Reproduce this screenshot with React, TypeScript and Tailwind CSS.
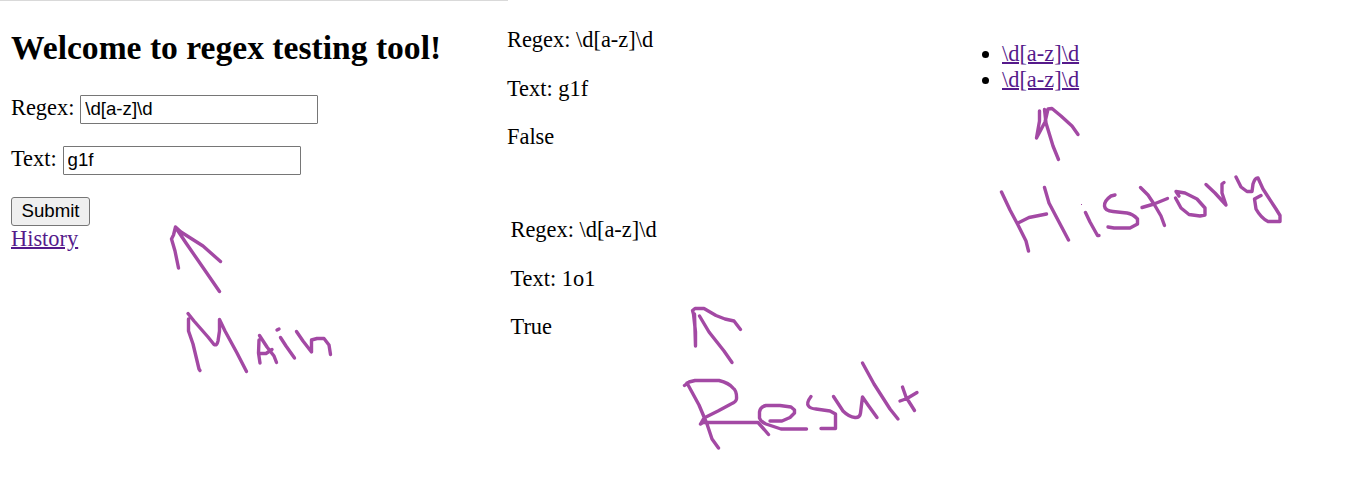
import React, { useState } from "react";

const strokes = [
  // Main: arrow
  "M178.5 268L175 251L171.5 239L173.500 235L175.500 227L181 232L203 246L220.500 261.500M176 228L186 243L204 269L219.500 291.500",
  // Main: letters
  "M188 313.500L194 321L208 337L214 344.500Q217 346 218 341L219.500 331V319.500L225 331L237 353L246.500 371.500M188.500 319V331L193 344L199 369L200 370.500",
  "M259.500 335.500L267 347L274 356L276.500 362.500M259 340L258.500 353L260 363M260 353.500H266L272 349.500",
  "M277 330L279 329M280.500 337.500L286 346L294.500 358",
  "M296.500 331.500L303 341L311.500 352V340L317 338.500H324L329 345L330.500 354.500",
  // Result: arrow
  "M695.500 346V332L693.500 314L692.500 310.500L695 308.500H704L716 315.500L725 319L734 321L740.500 329.500M694.500 314L695.500 346M699.500 316L709 332L724 351L732 362.500",
  // Result: letters
  "M684.500 385.500L689 382L695 380.500H719Q729 383 733 388Q737 391 736.500 399Q736 402 731 404L718 411L704 418L700.500 424L703 422.500H758L762 427L768.500 434.500M687 383L699 405L707 424L712 439L718.500 448",
  "M770 421H782L790 417.500L794.500 413V410L791 407L780 405.500H766Q760 407 759.500 412V418Q761 422 766 424L781 429H806.500",
  "M811 396.500Q806 403 808.500 406Q810 408.500 816 409L830 411L835.500 414V428.500H821M833.500 396.500L843 411Q849 417 855 417.500Q860 418 860.500 413L862.500 397L868 405L877 417.500M862.500 363L874 384L890 409L898 419M902.500 387L906 397L914.500 410.500M900 401L907 398.500L917 392.500",
  // History: arrow
  "M1039.500 111V121L1036.500 138L1045 122L1048 109L1052 108.500L1061 116L1072 126L1078 134.500M1044.500 109.500L1046 123L1053 146L1058.500 159.500",
  // History: letters
  "M1001.500 192L1010 210L1018 225L1026 241L1028.500 251M1018 223L1029 217.500L1046.500 214M1044.500 187.500L1049 203L1059 222L1068.500 240M1085.500 212.500L1090 222L1097.500 235.500L1099 235.500",
  "M1115 195L1111 196Q1104 201 1104.500 206Q1105 211 1113 211.500L1127 213Q1133 214 1137.500 219V224L1130 228H1114L1108 227",
  "M1140.500 187.500L1148 195L1154 204L1161 216L1164.500 225.500M1142 207.500L1154 204L1167.500 198.500",
  "M1179 196L1176 191.500L1185 193L1197 199L1205 208V215L1200 216L1189 214.500L1181 208L1175.500 198M1206 184.500L1215 193L1226 205L1222 193V184L1224 182.500",
  "M1236 177L1241 187L1247 191.500H1252L1253 184Q1255 177.500 1258 178L1263 189L1276 209L1280 215.500V221.500H1268Q1261 218 1256 209L1254.500 199L1261 195.500",
];

function Annotations() {
  return (
    <svg
      className="pointer-events-none absolute inset-0"
      width="1367"
      height="479"
      fill="none"
      stroke="#a349a4"
      strokeWidth="3.400"
      strokeLinecap="round"
      strokeLinejoin="round"
      aria-hidden="true"
    >
      {strokes.map((d) => (
        <path key={d} d={d} />
      ))}
      <rect x="1081" y="204" width="1" height="1" fill="#a349a4" stroke="none" />
    </svg>
  );
}

function Field({ label, initial }: { label: string; initial: string }) {
  const [value, setValue] = useState(initial);
  return (
    <label className="flex h-[29px] items-start gap-[5.8px]">
      <span className="whitespace-nowrap">{label}</span>
      <input
        value={value}
        onChange={(e) => setValue(e.target.value)}
        className="h-[29px] w-[238px] rounded-[1px] border border-[#767676] bg-white px-1 pb-px font-['Liberation_Sans',Arial,sans-serif] text-[18.67px] outline-none"
      />
    </label>
  );
}

function Result({ regex, text, outcome }: { regex: string; text: string; outcome: string }) {
  return (
    <section className="flex flex-col">
      <p>Regex: {regex}</p>
      <p className="mt-[23px]">Text: {text}</p>
      <p className="mt-[22px]">{outcome}</p>
    </section>
  );
}

export default function App() {
  const pattern = "\\d[a-z]\\d";
  return (
    <main className="relative flex h-[479px] w-[1367px] overflow-hidden bg-white font-['Liberation_Serif','Times_New_Roman',serif] text-[22.4px] leading-[26px] text-black">
      <section className="w-[507px] shrink-0 pl-[11px]">
        <div className="-ml-[11px] h-px w-[508px] bg-[#d9d9d9]" />
        <h1 className="mt-[27px] text-[33.6px] leading-[39px] font-bold whitespace-nowrap">
          Welcome to regex testing tool!
        </h1>
        <form className="mt-[28px] flex flex-col items-start" onSubmit={(e) => e.preventDefault()}>
          <Field label="Regex:" initial={pattern} />
          <div className="mt-[22px]">
            <Field label="Text:" initial="g1f" />
          </div>
          <button className="mt-[22px] h-[29px] w-[79px] rounded-[3px] border border-[#767676] bg-[#efefef] pb-px font-['Liberation_Sans',Arial,sans-serif] text-[18.67px] leading-[26px]">
            Submit
          </button>
        </form>
        <a href="#history" className="block w-fit text-[#551a8b] underline decoration-2">History</a>
      </section>
      <div className="flex w-[468px] shrink-0 flex-col gap-[67px] pt-[27px]">
        <Result regex={pattern} text="g1f" outcome="False" />
        <div className="pl-[3.5px]">
          <Result regex={pattern} text="1o1" outcome="True" />
        </div>
      </div>
      <ul className="list-disc pt-[41px] pl-[27px]">
        <li><a href="#first" className="text-[#551a8b] underline decoration-2">{pattern}</a></li>
        <li><a href="#second" className="text-[#551a8b] underline decoration-2">{pattern}</a></li>
      </ul>
      <Annotations />
    </main>
  );
}
